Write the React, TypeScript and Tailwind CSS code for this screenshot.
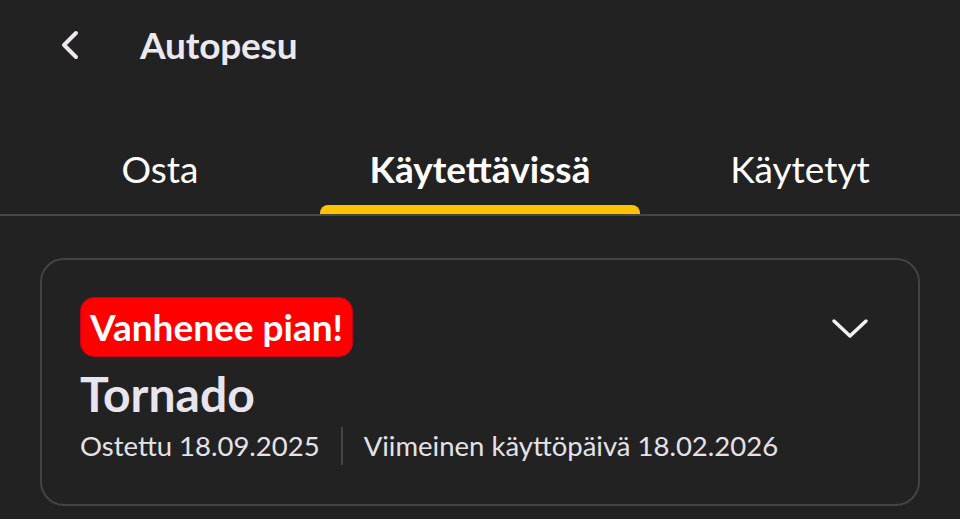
import React from "react";

const tabs = ["Osta", "Käytettävissä", "Käytetyt"];

export default function App() {
  const active = 1;
  return (
    <div className="w-[960px] h-[519px] overflow-hidden bg-[#222222] text-[#ece8f0] font-['Lato',sans-serif]">
      {/* Header */}
      <div className="flex items-center h-[90px] pl-[56px]">
        <svg width="28" height="36" viewBox="0 0 28 36" className="text-[#ece8f0]">
          <path d="M20 6 L8 18 L20 30" fill="none" stroke="currentColor" strokeWidth="4" strokeLinecap="round" strokeLinejoin="round" />
        </svg>
        <span className="ml-[56px] text-[37px] font-bold tracking-[-0.2px]">Autopesu</span>
      </div>

      {/* Tabs */}
      <div className="mt-[35px] flex border-b-2 border-[#464646]">
        {tabs.map((t, i) => (
          <div key={t} className="flex-1 flex flex-col items-center">
            <span
              className={`h-[80px] pt-[8px] flex items-center text-[37px] ${
                i === active ? "font-bold text-white" : "font-normal text-white"
              }`}
            >
              {t}
            </span>
            <div className={`h-[9px] w-full rounded-t-[8px] ${i === active ? "bg-[#fdc300]" : "bg-transparent"}`} />
          </div>
        ))}
      </div>

      {/* Card */}
      <div className="mx-[40px] mt-[42px] rounded-[24px] border-2 border-[#444444] px-[38px] pt-[37px] pb-[38px]">
        <div className="flex items-start justify-between">
          <div>
            <span className="inline-flex items-center h-[60px] px-[9px] rounded-[14px] bg-[#ff0000] border border-[#c4001a] text-white text-[37px] font-bold">
              Vanhenee pian!
            </span>
          </div>
          <svg width="40" height="24" viewBox="0 0 40 24" className="mt-[19px] mr-[10px] text-[#f2f0f4]">
            <path d="M4 5 L20 20 L36 5" fill="none" stroke="currentColor" strokeWidth="3.5" strokeLinecap="round" strokeLinejoin="round" />
          </svg>
        </div>
        <div className="mt-[10px] text-[48px] font-bold leading-[54px] text-[#e9e5ee]">Tornado</div>
        <div className="mt-[4px] flex items-center text-[27.5px] text-[#e4e2e8]">
          <span>Ostettu 18.09.2025</span>
          <div className="mx-[21px] w-[2px] h-[38px] bg-[#464646]" />
          <span>Viimeinen käyttöpäivä 18.02.2026</span>
        </div>
      </div>
    </div>
  );
}
